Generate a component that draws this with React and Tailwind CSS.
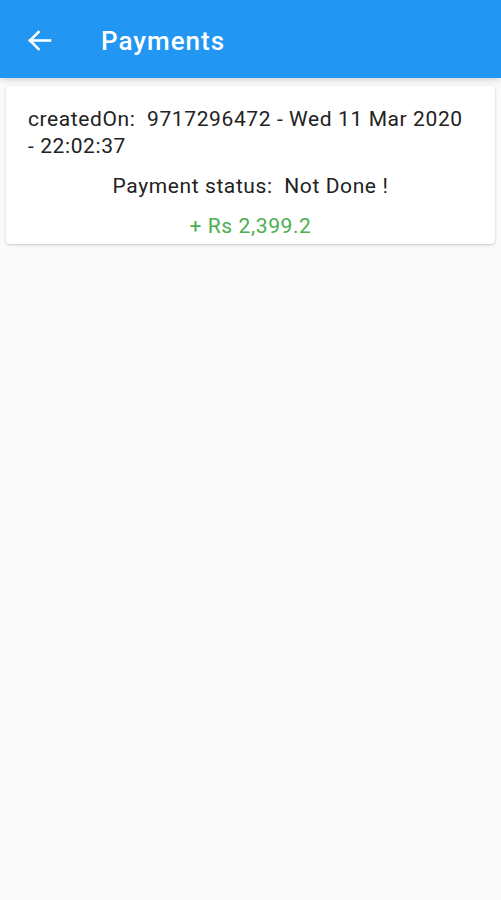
import React from "react";

const App = () => {
  return (
    <div
      className="min-h-[900px] bg-[#fafafa]"
      style={{ fontFamily: "Roboto, 'Noto Sans', sans-serif" }}
    >
      {/* App bar */}
      <div className="h-[78px] bg-[#2196f3] flex items-center shadow-md">
        <button className="ml-[27px] mt-[2px] w-[25px] h-[22px] flex items-center justify-center">
          <svg width="25" height="21" viewBox="0 0 25 21" fill="none" stroke="white" strokeWidth="2.6" strokeLinecap="square">
            <path d="M3 10.5H23" />
            <path d="M11.5 2L3 10.5L11.5 19" />
          </svg>
        </button>
        <h1 className="ml-[49px] mt-[4px] text-white text-[26px] font-medium tracking-[1px]">Payments</h1>
      </div>

      {/* Payment card */}
      <div className="mx-[6px] mt-[8px] bg-white rounded-[4px] shadow-[0_1px_3px_rgba(0,0,0,0.2)] px-[22px] pt-[20px] pb-[4px]">
        <p className="text-[21px] leading-[27px] tracking-[0.6px] text-[#222]">
          createdOn:&nbsp; 9717296472 - Wed 11 Mar 2020 - 22:02:37
        </p>
        <p className="mt-[13px] text-center text-[21px] leading-[27px] tracking-[0.6px] text-[#222]">
          Payment status:&nbsp; Not Done !
        </p>
        <p className="mt-[13px] text-center text-[21px] leading-[27px] tracking-[0.6px] text-[#4caf50]">
          + Rs 2,399.2
        </p>
      </div>
    </div>
  );
};

export default App;
